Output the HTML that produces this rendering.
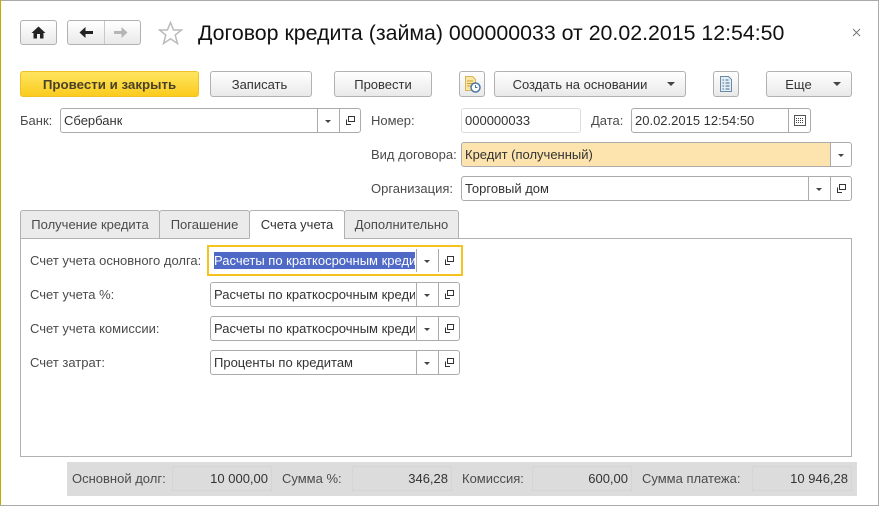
<!DOCTYPE html>
<html lang="ru"><head><meta charset="utf-8"><title>Договор кредита</title>
<style>
html,body{margin:0;padding:0;background:#fff}
#p{position:relative;width:879px;height:506px;overflow:hidden;background:#fff;font:13px/16px "Liberation Sans",sans-serif;color:#4b4b4b}
#p div,#p span.a,#p svg{position:absolute;box-sizing:border-box}
.btn{top:71px;height:26px;border:1px solid #b1b1b1;border-radius:3px;background:linear-gradient(#fff,#e9e9e9);text-align:center;line-height:25px;color:#333;white-space:nowrap}
.f{height:25px;border:1px solid #ababab;border-radius:3px;background:#fff}
.t{color:#333;white-space:nowrap;overflow:hidden;top:4px;left:3px}
.l{white-space:nowrap}
.d{top:0;bottom:0;width:1px;background:#ababab}
.tab{top:210px;height:29px;border:1px solid #b1b1b1;border-bottom:1px solid #b1b1b1;border-radius:3px 3px 0 0;background:#ebebeb;text-align:center;line-height:27px;color:#4b4b4b;white-space:nowrap}
.s{top:462px;line-height:34px;color:#4b4b4b;white-space:nowrap}
.c{top:466px;height:25px;width:100px;border:1px solid #d5d5d5;background:#dcdcdc;text-align:right;padding-right:3px;line-height:23px;color:#333;white-space:nowrap}
.ar{width:0;height:0;border-left:3px solid transparent;border-right:3px solid transparent;border-top:3px solid #444}
</style></head><body><div id="p">
<div style="left:0;top:0;width:879px;height:1px;background:#aaa"></div>
<div style="left:0;top:0;width:1px;height:506px;background:#c7a900"></div>
<div style="left:0;top:505px;width:879px;height:1px;background:#aaa"></div>
<div style="left:878px;top:0;width:1px;height:506px;background:#aaa"></div>
<div class="btn" style="left:20px;top:20px;width:37px;height:25px"></div>
<svg style="left:31px;top:26px" width="15" height="13" viewBox="0 0 15 13"><path d="M7.500 0.500L14.500 7H12.500V12.500H9V8H6V12.500H2.500V7H0.500Z" fill="#222"/></svg>
<div class="btn" style="left:67px;top:20px;width:74px;height:25px"></div>
<div style="left:104px;top:21px;width:1px;height:23px;background:#c8c8c8"></div>
<svg style="left:79px;top:26px" width="15" height="13" viewBox="0 0 15 13"><path d="M0.500 6.500L6.500 1V5H14V8H6.500V12Z" fill="#222"/></svg>
<svg style="left:113px;top:26px" width="15" height="13" viewBox="0 0 15 13"><path d="M14.500 6.500L8.500 1V5H1V8H8.500V12Z" fill="#b5b5b5"/></svg>
<svg style="left:158px;top:21px" width="25" height="24" viewBox="0 0 25 24"><path d="M12.500 1.500L15.600 9H23.500L17.200 14L19.500 22.500L12.500 17.800L5.500 22.500L7.800 14L1.500 9H9.400Z" fill="#fff" stroke="#bbb" stroke-width="1.500"/></svg>
<div class="l" style="left:198px;top:20px;font-size:21.330px;line-height:26px;color:#111">Договор кредита (займа) 000000033 от 20.02.2015 12:54:50</div>
<svg style="left:852px;top:28px" width="9" height="9" viewBox="0 0 9 9"><path d="M1 1L8 8M8 1L1 8" stroke="#777" stroke-width="1"/></svg>

<div class="btn" style="left:20px;width:179px;border-color:#eec227;background:linear-gradient(#fee55f,#fbcb1e);font-weight:bold;color:#4a4228;font-size:13.300px">Провести и закрыть</div>
<div class="btn" style="left:210px;width:102px;padding-right:3px">Записать</div>
<div class="btn" style="left:334px;width:98px">Провести</div>
<div class="btn" style="left:459px;width:26px"></div>
<svg style="left:464px;top:75px" width="17" height="18" viewBox="0 0 17 18"><path d="M1.500 1.500H8.500L11.500 4.500V15.500H1.500Z" fill="#fbe6a2" stroke="#d5b45c"/><path d="M3 6H9M3 8.500H9M3 11H7" stroke="#c89c3c"/><circle cx="11.500" cy="12.500" r="4.500" fill="#fff" stroke="#4a76a8" stroke-width="1.500"/><path d="M11.500 10V12.500H13.500" stroke="#4a76a8" fill="none"/></svg>
<div class="btn" style="left:494px;width:192px;padding-right:20px">Создать на основании</div>
<div class="ar" style="left:667px;top:82px;border-left-width:4px;border-right-width:4px;border-top-width:4px"></div>
<div class="btn" style="left:713px;width:26px"></div>
<svg style="left:719px;top:76px" width="14" height="16" viewBox="0 0 14 16"><path d="M1.500 0.500H9.500L12.500 3.500V15.500H1.500Z" fill="#e4eef6" stroke="#6a8aa6"/><path d="M3.500 4H5M6.500 4H9.500M3.500 7H5M6.500 7H10.500M3.500 10H5M6.500 10H10.500M3.500 13H5M6.500 13H10.500" stroke="#466a8c"/></svg>
<div class="btn" style="left:766px;width:86px;padding-right:21px">Еще</div>
<div class="ar" style="left:833px;top:82px;border-left-width:4px;border-right-width:4px;border-top-width:4px"></div>

<div class="l" style="left:20px;top:113px">Банк:</div>
<div class="f" style="left:60px;top:108px;width:301px"><div class="t">Сбербанк</div><div class="d" style="left:256px"></div><div class="d" style="left:278px"></div><div class="ar" style="left:264px;top:11px"></div><svg style="left:284px;top:6px" width="11" height="11" viewBox="0 0 11 11"><path d="M3.500 1.500H9.500V6.500H3.500ZM1.500 4.500V9.500H6" fill="none" stroke="#333"/></svg></div>
<div class="l" style="left:371px;top:113px">Номер:</div>
<div class="f" style="left:461px;top:108px;width:120px;border-color:#dcdcdc"><div class="t">000000033</div></div>
<div class="l" style="left:591px;top:113px">Дата:</div>
<div class="f" style="left:631px;top:108px;width:180px"><div class="t">20.02.2015 12:54:50</div><div class="d" style="left:156px"></div><svg style="left:162px;top:6px" width="12" height="11" viewBox="0 0 12 11"><rect x="0.500" y="0.500" width="11" height="10" fill="#fff" stroke="#555"/><path d="M2 3.500H10M2 5.500H10M2 7.500H10" stroke="#444" stroke-dasharray="1 1"/></svg></div>

<div class="l" style="left:371px;top:147px">Вид договора:</div>
<div class="f" style="left:461px;top:142px;width:391px;background:#fde4ae"><div class="t">Кредит (полученный)</div><div style="left:368px;top:0;right:0;bottom:0;background:#fff;border-left:1px solid #ababab;border-radius:0 2px 2px 0"></div><div class="ar" style="left:376px;top:11px"></div></div>
<div class="l" style="left:371px;top:181px">Организация:</div>
<div class="f" style="left:461px;top:176px;width:391px"><div class="t">Торговый дом</div><div class="d" style="left:346px"></div><div class="d" style="left:368px"></div><div class="ar" style="left:354px;top:11px"></div><svg style="left:374px;top:6px" width="11" height="11" viewBox="0 0 11 11"><path d="M3.500 1.500H9.500V6.500H3.500ZM1.500 4.500V9.500H6" fill="none" stroke="#333"/></svg></div>

<div style="left:20px;top:238px;width:832px;height:219px;border:1px solid #b1b1b1;background:#fff"></div>
<div class="tab" style="left:20px;width:140px">Получение кредита</div>
<div class="tab" style="left:159px;width:91px">Погашение</div>
<div class="tab" style="left:249px;width:96px;background:#fff;border-bottom-color:#fff;color:#333">Счета учета</div>
<div class="tab" style="left:344px;width:115px">Дополнительно</div>

<div class="l" style="left:30px;top:253px">Счет учета основного долга:</div>
<div style="left:207px;top:245px;width:256px;height:31px;border:2px solid #f6c21e"></div>
<div style="left:214px;top:252px;width:201px;height:17px;background:#4f69c6"></div>
<div class="l" style="left:214px;top:253px;width:201px;overflow:hidden;color:#fff">Расчеты по краткосрочным кредитам</div>
<div style="left:416px;top:249px;width:1px;height:23px;background:#ababab"></div>
<div style="left:438px;top:249px;width:1px;height:23px;background:#ababab"></div>
<div class="ar" style="left:424px;top:260px"></div>
<svg style="left:444px;top:255px" width="11" height="11" viewBox="0 0 11 11"><path d="M3.500 1.500H9.500V6.500H3.500ZM1.500 4.500V9.500H6" fill="none" stroke="#333"/></svg>

<div class="l" style="left:30px;top:287px">Счет учета %:</div>
<div class="f" style="left:210px;top:282px;width:250px"><div class="t" style="width:201px">Расчеты по краткосрочным кредитам</div><div class="d" style="left:205px"></div><div class="d" style="left:227px"></div><div class="ar" style="left:213px;top:11px"></div><svg style="left:233px;top:6px" width="11" height="11" viewBox="0 0 11 11"><path d="M3.500 1.500H9.500V6.500H3.500ZM1.500 4.500V9.500H6" fill="none" stroke="#333"/></svg></div>
<div class="l" style="left:30px;top:321px">Счет учета комиссии:</div>
<div class="f" style="left:210px;top:316px;width:250px"><div class="t" style="width:201px">Расчеты по краткосрочным кредитам</div><div class="d" style="left:205px"></div><div class="d" style="left:227px"></div><div class="ar" style="left:213px;top:11px"></div><svg style="left:233px;top:6px" width="11" height="11" viewBox="0 0 11 11"><path d="M3.500 1.500H9.500V6.500H3.500ZM1.500 4.500V9.500H6" fill="none" stroke="#333"/></svg></div>
<div class="l" style="left:30px;top:355px">Счет затрат:</div>
<div class="f" style="left:210px;top:350px;width:250px"><div class="t" style="width:201px">Проценты по кредитам</div><div class="d" style="left:205px"></div><div class="d" style="left:227px"></div><div class="ar" style="left:213px;top:11px"></div><svg style="left:233px;top:6px" width="11" height="11" viewBox="0 0 11 11"><path d="M3.500 1.500H9.500V6.500H3.500ZM1.500 4.500V9.500H6" fill="none" stroke="#333"/></svg></div>

<div style="left:67px;top:462px;width:790px;height:34px;background:#dcdcdc"></div>
<div class="s" style="left:72px">Основной долг:</div><div class="c" style="left:172px">10 000,00</div>
<div class="s" style="left:282px">Сумма %:</div><div class="c" style="left:352px">346,28</div>
<div class="s" style="left:462px">Комиссия:</div><div class="c" style="left:532px">600,00</div>
<div class="s" style="left:642px">Сумма платежа:</div><div class="c" style="left:752px">10 946,28</div>
</div></body></html>
